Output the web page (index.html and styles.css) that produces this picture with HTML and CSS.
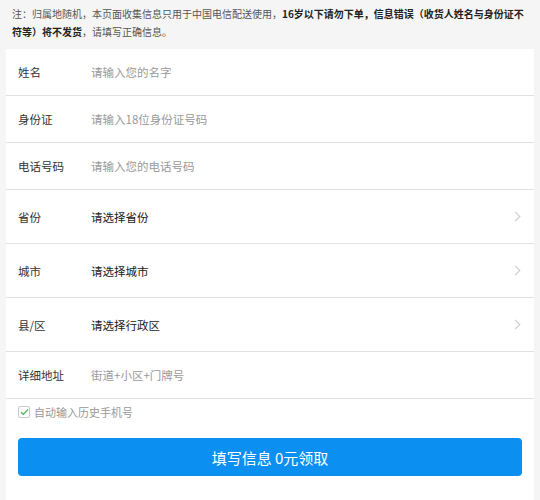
FILE: index.html
```html
<!DOCTYPE html>
<html lang="zh-CN">
<head>
    <meta charset="UTF-8">
    <meta name="viewport" content="width=device-width, initial-scale=1.0">
    <title>填写信息</title>
    <link rel="stylesheet" href="styles.css">
</head>
<body>
<div class="notice">
    注：归属地随机，本页面收集信息只用于中国电信配送使用，<b>16岁以下请勿下单，信息错误（收货人姓名与身份证不</b><b>符等）将不发货</b>，请填写正确信息。
</div>
<div class="card">
    <div class="row">
        <label class="label" for="name">姓名</label>
        <input class="field" type="text" id="name" placeholder="请输入您的名字">
    </div>
    <div class="row">
        <label class="label" for="idcard">身份证</label>
        <input class="field" type="text" id="idcard" placeholder="请输入18位身份证号码">
    </div>
    <div class="row">
        <label class="label" for="phone">电话号码</label>
        <input class="field" type="tel" id="phone" placeholder="请输入您的电话号码">
    </div>
    <div class="row row-select">
        <span class="label">省份</span>
        <span class="value">请选择省份</span>
        <span class="arrow"></span>
    </div>
    <div class="row row-select">
        <span class="label">城市</span>
        <span class="value">请选择城市</span>
        <span class="arrow"></span>
    </div>
    <div class="row row-select">
        <span class="label">县/区</span>
        <span class="value">请选择行政区</span>
        <span class="arrow"></span>
    </div>
    <div class="row">
        <label class="label" for="address">详细地址</label>
        <input class="field" type="text" id="address" placeholder="街道+小区+门牌号">
    </div>
    <label class="history">
        <span class="check">
            <svg width="9" height="8" viewBox="0 0 9 8"><path d="M1 4.2 L3.4 6.4 L8 1.4" fill="none" stroke="#4caf50" stroke-width="1.3"/></svg>
        </span>
        自动输入历史手机号
    </label>
    <button class="button">填写信息 0元领取</button>
</div>
</body>
</html>
```

FILE: styles.css
```css
body {
    margin: 0;
    background: #f5f5f5;
    font-family: "Microsoft YaHei", "Noto Sans CJK SC", "Liberation Sans", sans-serif;
    color: #333;
}

.notice {
    padding: 5px 7px 8px 12px;
    font-size: 10px;
    line-height: 18px;
    color: #555;
}

.notice b {
    color: #222;
}

.card {
    margin: 0 6px;
    background: #fff;
    height: 460px;
}

.row {
    display: flex;
    align-items: center;
    height: 46px;
    border-bottom: 1px solid #e2e2e2;
    padding: 0 12px;
}

.row-select {
    height: 53px;
}

.label {
    width: 73px;
    font-size: 11.5px;
    color: #333;
}

.field {
    flex: 1;
    border: none;
    outline: none;
    padding: 0;
    font-family: inherit;
    font-size: 11.5px;
    color: #333;
    background: transparent;
}

.field::placeholder {
    color: #999;
}

.value {
    flex: 1;
    font-size: 11.5px;
    color: #1a1a1a;
}

.arrow {
    width: 6px;
    height: 6px;
    border-top: 1.5px solid #c8c8c8;
    border-right: 1.5px solid #c8c8c8;
    transform: rotate(45deg);
    margin-right: 3px;
}

.history {
    display: flex;
    align-items: center;
    height: 26px;
    padding: 0 12px;
    font-size: 11px;
    color: #999;
}

.check {
    display: flex;
    align-items: center;
    justify-content: center;
    width: 10px;
    height: 10px;
    border: 1px solid #ccc;
    border-radius: 2px;
    margin-right: 4px;
}

.button {
    display: block;
    width: calc(100% - 24px);
    margin: 13px 12px 0;
    height: 38px;
    border: none;
    border-radius: 4px;
    background: #0b8ff0;
    color: #fff;
    font-family: inherit;
    font-size: 15px;
    cursor: pointer;
}
```
